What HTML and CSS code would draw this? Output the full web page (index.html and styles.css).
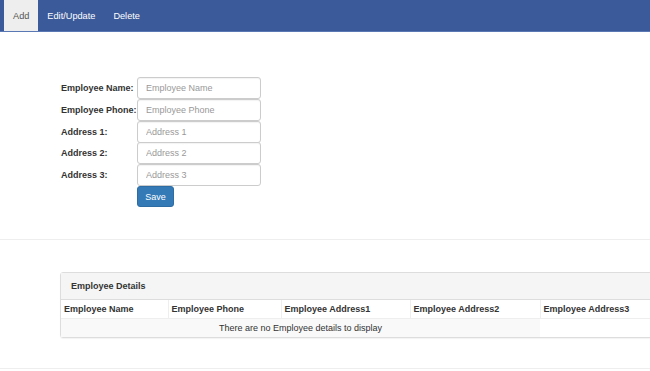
FILE: index.html
```html
<!DOCTYPE html>
<html lang="en">
<head>
    <meta charset="UTF-8">
    <title>Employee Details</title>
    <link rel="stylesheet" href="styles.css">
</head>
<body>
    <div class="emp-nav">
        <a class="emp-tab active">Add</a>
        <a class="emp-tab">Edit/Update</a>
        <a class="emp-tab">Delete</a>
    </div>

    <div class="emp-form">
        <div class="emp-row">
            <label>Employee Name:</label>
            <input type="text" class="emp-input" placeholder="Employee Name">
        </div>
        <div class="emp-row">
            <label>Employee Phone:</label>
            <input type="text" class="emp-input" placeholder="Employee Phone">
        </div>
        <div class="emp-row">
            <label>Address 1:</label>
            <input type="text" class="emp-input" placeholder="Address 1">
        </div>
        <div class="emp-row">
            <label>Address 2:</label>
            <input type="text" class="emp-input" placeholder="Address 2">
        </div>
        <div class="emp-row">
            <label>Address 3:</label>
            <input type="text" class="emp-input" placeholder="Address 3">
        </div>
        <div class="emp-row">
            <label></label>
            <button class="emp-button">Save</button>
        </div>
    </div>

    <hr class="emp-rule">

    <div class="emp-panel">
        <div class="emp-panel-heading">Employee Details</div>
        <table class="emp-table">
            <thead>
                <tr>
                    <th class="col-name">Employee Name</th>
                    <th class="col-phone">Employee Phone</th>
                    <th class="col-addr1">Employee Address1</th>
                    <th class="col-addr2">Employee Address2</th>
                    <th>Employee Address3</th>
                </tr>
            </thead>
            <tbody>
                <tr>
                    <td colspan="4" class="emp-empty">There are no Employee details to display</td>
                </tr>
            </tbody>
        </table>
    </div>

    <hr class="emp-rule bottom">
</body>
</html>
```

FILE: styles.css
```css
* {
    box-sizing: border-box;
}

body {
    margin: 0;
    font-family: "Liberation Sans", Arial, sans-serif;
    font-size: 9px;
    color: #333;
    background: #fff;
    overflow-x: hidden;
}

.emp-nav {
    display: flex;
    height: 32px;
    padding-left: 4px;
    background: #3b5a9a;
    border-bottom: 1px solid #5a78b3;
}

.emp-tab {
    display: flex;
    align-items: center;
    padding: 0 9px;
    color: #fff;
    font-size: 9.2px;
    cursor: pointer;
}

.emp-tab.active {
    background: #eeeeee;
    color: #555;
}

.emp-form {
    padding: 45px 0 0 61px;
}

.emp-row {
    display: flex;
    align-items: center;
}

.emp-row label {
    width: 76px;
    font-weight: bold;
    white-space: nowrap;
}

.emp-input {
    width: 124px;
    height: 22px;
    margin-bottom: -0.2px;
    padding: 0 8px;
    border: 1px solid #ccc;
    border-radius: 3px;
    font-family: inherit;
    font-size: 9px;
    color: #555;
    box-shadow: inset 0 1px 1px rgba(0,0,0,0.05);
}

.emp-input::placeholder {
    color: #999;
}

.emp-button {
    width: 37px;
    height: 21px;
    padding: 0;
    background: #337ab7;
    border: 1px solid #2e6da4;
    border-radius: 3px;
    color: #fff;
    font-family: inherit;
    font-size: 9px;
    cursor: pointer;
}

.emp-rule {
    margin: 32px 0 0;
    border: 0;
    border-top: 1px solid #eee;
}

.emp-rule.bottom {
    margin-top: 30px;
}

.emp-panel {
    margin: 32px -70px 0 60px;
    border: 1px solid #ddd;
    border-radius: 3px;
    box-shadow: 0 1px 1px rgba(0,0,0,0.05);
}

.emp-panel-heading {
    height: 27px;
    padding: 0 10px;
    display: flex;
    align-items: center;
    background: #f5f5f5;
    border-bottom: 1px solid #ddd;
    font-weight: bold;
    color: #333;
}

.emp-table {
    width: 100%;
    border-collapse: collapse;
}

.emp-table th {
    height: 18px;
    padding: 0 3px;
    text-align: left;
    font-weight: bold;
    border-right: 1px solid #eee;
    border-bottom: 1px solid #eee;
}

.col-name { width: 107px; }
.col-phone { width: 113px; }
.col-addr1 { width: 129px; }
.col-addr2 { width: 130px; }

.emp-empty {
    height: 19px;
    padding: 0;
    text-align: center;
    background: #f9f9f9;
    color: #333;
}
```
